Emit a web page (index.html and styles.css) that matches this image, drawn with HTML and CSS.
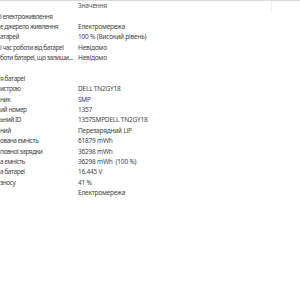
FILE: index.html
```html
<!DOCTYPE html>
<html>
<head>
<meta charset="utf-8">
<link rel="stylesheet" href="styles.css">
</head>
<body>
<div class="list">
  <div class="head">
    <div class="hcell name"></div>
    <div class="hcell value">Значення</div>
    <div class="hcell rest"></div>
  </div>
  <div class="row"><span class="name">ї електроживлення</span><span class="value"></span></div>
  <div class="row"><span class="name">е джерело живлення</span><span class="value">Електромережа</span></div>
  <div class="row"><span class="name">атарей</span><span class="value">100 % (Високий рівень)</span></div>
  <div class="row"><span class="name">і час роботи від батареї</span><span class="value">Невідомо</span></div>
  <div class="row"><span class="name">боти батареї, що залиши...</span><span class="value">Невідомо</span></div>
  <div class="row"><span class="name"></span><span class="value"></span></div>
  <div class="row"><span class="name">я батареї</span><span class="value"></span></div>
  <div class="row"><span class="name">истрою</span><span class="value">DELL TN2GY18</span></div>
  <div class="row"><span class="name">ник</span><span class="value">SMP</span></div>
  <div class="row"><span class="name">ий номер</span><span class="value">1357</span></div>
  <div class="row"><span class="name">ьний ID</span><span class="value">1357SMPDELL TN2GY18</span></div>
  <div class="row"><span class="name">ний</span><span class="value">Перезарядний LiP</span></div>
  <div class="row"><span class="name">ована ємність</span><span class="value">61879 mWh</span></div>
  <div class="row"><span class="name">повної зарядки</span><span class="value">36298 mWh</span></div>
  <div class="row"><span class="name">а ємність</span><span class="value">36298 mWh&nbsp; (100 %)</span></div>
  <div class="row"><span class="name">а батареї</span><span class="value">16.445 V</span></div>
  <div class="row"><span class="name">зносу</span><span class="value">41 %</span></div>
  <div class="row"><span class="name"></span><span class="value">Електромережа</span></div>
</div>
</body>
</html>
```
FILE: styles.css
```css
html, body {
  margin: 0;
  padding: 0;
  background: #ffffff;
}
body {
  width: 300px;
  height: 300px;
  overflow: hidden;
  font-family: "Noto Sans", "Open Sans", sans-serif;
  font-size: 6.5px;
  letter-spacing: -0.2px;
  color: #454545;
}
.list {
  display: flex;
  flex-direction: column;
}
.head {
  display: grid;
  grid-template-columns: 78px 194px 1fr;
  height: 11.5px;
  border-top: 1px solid #dcdcdc;
  box-sizing: border-box;
}
.hcell {
  line-height: 10.5px;
  white-space: nowrap;
  overflow: hidden;
  color: #555555;
}
.hcell.value {
  border-right: 1px solid #f2f2f2;
}
.row {
  display: grid;
  grid-template-columns: 78px 1fr;
  height: 10.4px;
  line-height: 10.4px;
  white-space: nowrap;
}
.row .name {
  overflow: hidden;
  min-width: 0;
  letter-spacing: -0.45px;
}
.row .value {
  overflow: hidden;
  min-width: 0;
}
```
